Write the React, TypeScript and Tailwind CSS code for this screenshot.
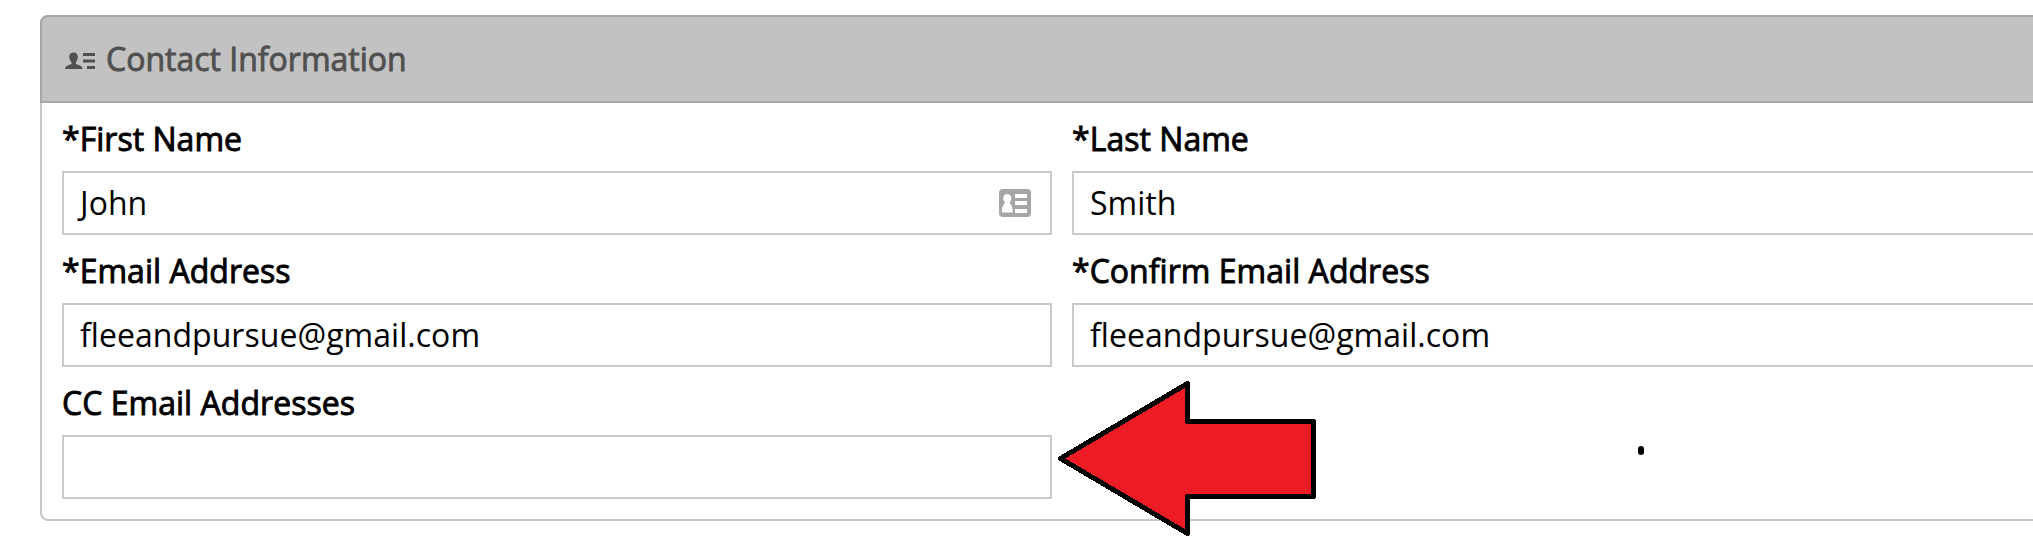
type FieldProps = {
  label: string;
  value: string;
  card?: boolean;
};

function HeaderIcon() {
  return (
    <svg width="30" height="18" viewBox="0 0 30 18" fill="currentColor" className="mt-1">
      <path d="M8.500.5c2.700 0 4.300 1.700 4.300 4.400 0 2.200-.9 4.200-1.900 5.200v1.700c0 .7 4.600 1.500 5.800 3 .5.600.8 1.200.8 2.200H0c0-1 .3-1.600.8-2.200 1.200-1.500 5.700-2.300 5.700-3v-1.700c-1-1-2.300-3-2.300-5.200C4.200 2.200 5.800.5 8.500.5z" />
      <path d="M18 1h12v3H18zM18 7.500h12v3H18zM22 14h8v3h-8z" />
    </svg>
  );
}

function CardIcon() {
  return (
    <svg width="32" height="28" viewBox="0 0 32 28" className="shrink-0">
      <rect width="32" height="28" rx="4" fill="#a6a6a6" />
      <g fill="#fff">
        <ellipse cx="8.300" cy="9.500" rx="4" ry="4.500" />
        <path d="M6.300 13h4c.3 1.500 3.500 2.800 3.500 10.500h-11C2.800 15.800 6 14.500 6.300 13z" />
        <path d="M16 5h12v4H16zM16 12h12v4H16zM16 20h12v4H16z" />
      </g>
    </svg>
  );
}

function Field({ label, value, card = false }: FieldProps) {
  return (
    <div className="flex h-[132px] flex-col">
      <label className="h-[54px] text-[32px] leading-[44px] tracking-[0.03px] [-webkit-text-stroke:0.9px_#000]">
        {label}
      </label>
      <div className="flex h-16 items-center justify-between border-2 border-[#cacaca] bg-white pr-[19px] pl-4 text-[32px] leading-[44px] tracking-[0.04px]">
        <span className="pb-px">{value}</span>
        {card && <CardIcon />}
      </div>
    </div>
  );
}

export default function App() {
  return (
    <main className="relative h-[537px] w-full overflow-hidden bg-white pt-[15px] pl-10 font-['Open_Sans',sans-serif] text-black">
      <section className="h-[506px] w-[2044px] rounded-lg border-2 border-[#c8c8c8]">
        <header className="-mx-0.5 -mt-0.5 flex h-[88px] items-center gap-[11px] rounded-t-lg border-2 border-[#a6a6a6] bg-[#c2c2c2] pl-[23px] text-[#505050]">
          <HeaderIcon />
          <h2 className="text-[32px] leading-[44px] [-webkit-text-stroke:0.9px_#505050]">
            Contact Information
          </h2>
        </header>
        <div className="grid grid-cols-[990px_990px] gap-x-5 pt-3.5 pl-5">
          <Field label="*First Name" value="John" card />
          <Field label="*Last Name" value="Smith" />
          <Field label="*Email Address" value="fleeandpursue@gmail.com" />
          <Field label="*Confirm Email Address" value="fleeandpursue@gmail.com" />
          <Field label="CC Email Addresses" value="" />
        </div>
      </section>

      {/* callout pointing at the CC field */}
      <svg
        width="260"
        height="157"
        viewBox="0 0 260 157"
        shapeRendering="crispEdges"
        className="absolute top-[380px] left-[1057px]"
      >
        <path
          d="M3.500 78.500 130.500 3.500V41.500H256.500V116.500H130.500V153.500L3.500 78.500z"
          fill="#ed1c24"
          stroke="#000"
          strokeWidth="5"
          strokeLinejoin="round"
        />
      </svg>
      <span className="absolute top-[446px] left-[1638px] h-[9px] w-1.5 rounded-full bg-black" />
    </main>
  );
}
